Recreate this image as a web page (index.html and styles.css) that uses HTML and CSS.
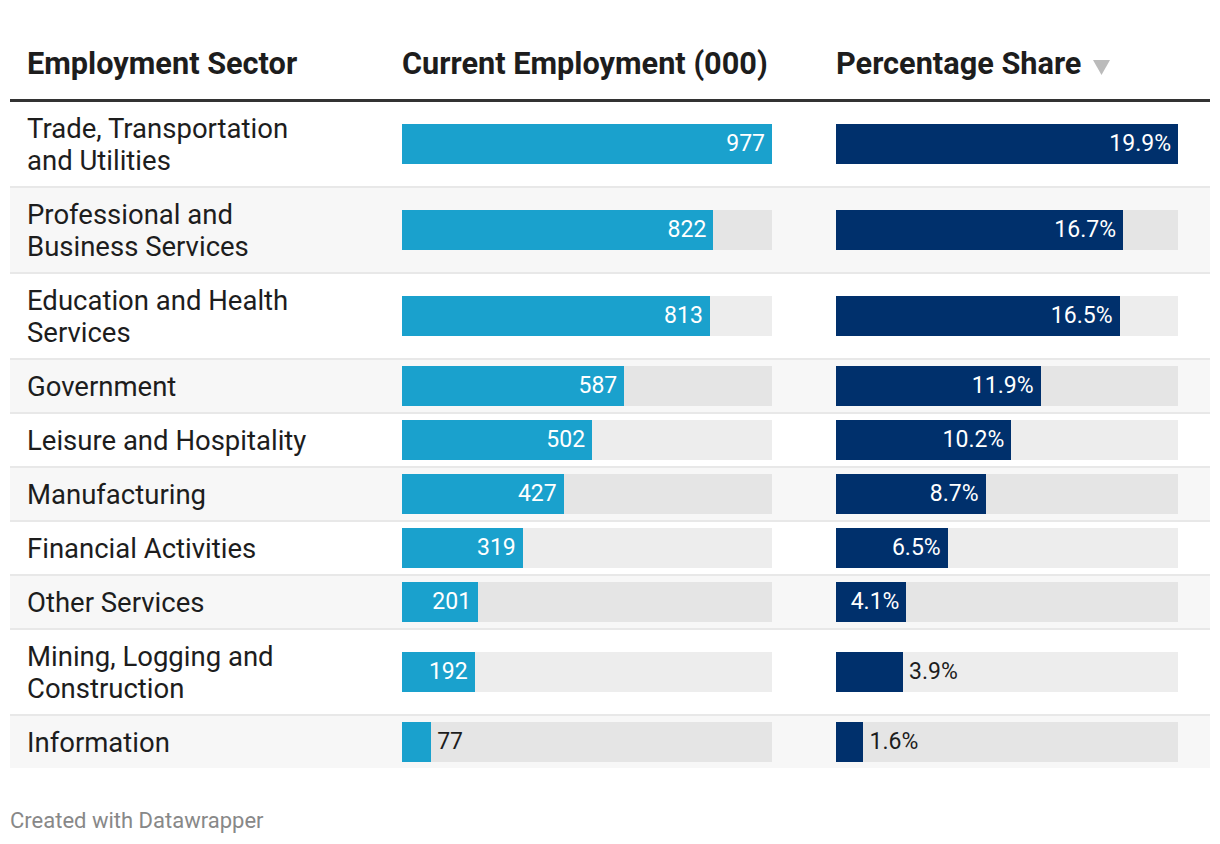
FILE: index.html
```html
<!DOCTYPE html>
<html lang="en">
<head>
<meta charset="utf-8">
<title>Employment by Sector</title>
<link rel="stylesheet" href="styles.css">
</head>
<body>
<div class="chart">
  <div class="table">
    <div class="row head">
      <div class="th">Employment Sector</div>
      <div class="th">Current Employment (000)</div>
      <div class="th">Percentage Share <svg class="sort" width="17" height="15" viewBox="0 0 17 15"><polygon points="0,0 17,0 8.5,15" fill="#bbbbbb"/></svg></div>
    </div>

    <div class="row">
      <div class="label">Trade, Transportation and Utilities</div>
      <div class="barcell"><div class="track"><div class="bar blue" style="width:100%"><span class="val in">977</span></div></div></div>
      <div class="barcell"><div class="track"><div class="bar navy" style="width:100%"><span class="val in">19.9%</span></div></div></div>
    </div>

    <div class="row">
      <div class="label">Professional and Business Services</div>
      <div class="barcell"><div class="track"><div class="bar blue" style="width:84.14%"><span class="val in">822</span></div></div></div>
      <div class="barcell"><div class="track"><div class="bar navy" style="width:83.92%"><span class="val in">16.7%</span></div></div></div>
    </div>

    <div class="row">
      <div class="label">Education and Health Services</div>
      <div class="barcell"><div class="track"><div class="bar blue" style="width:83.21%"><span class="val in">813</span></div></div></div>
      <div class="barcell"><div class="track"><div class="bar navy" style="width:82.91%"><span class="val in">16.5%</span></div></div></div>
    </div>

    <div class="row">
      <div class="label">Government</div>
      <div class="barcell"><div class="track"><div class="bar blue" style="width:60.08%"><span class="val in">587</span></div></div></div>
      <div class="barcell"><div class="track"><div class="bar navy" style="width:59.80%"><span class="val in">11.9%</span></div></div></div>
    </div>

    <div class="row">
      <div class="label">Leisure and Hospitality</div>
      <div class="barcell"><div class="track"><div class="bar blue" style="width:51.38%"><span class="val in">502</span></div></div></div>
      <div class="barcell"><div class="track"><div class="bar navy" style="width:51.26%"><span class="val in">10.2%</span></div></div></div>
    </div>

    <div class="row">
      <div class="label">Manufacturing</div>
      <div class="barcell"><div class="track"><div class="bar blue" style="width:43.71%"><span class="val in">427</span></div></div></div>
      <div class="barcell"><div class="track"><div class="bar navy" style="width:43.72%"><span class="val in">8.7%</span></div></div></div>
    </div>

    <div class="row">
      <div class="label">Financial Activities</div>
      <div class="barcell"><div class="track"><div class="bar blue" style="width:32.65%"><span class="val in">319</span></div></div></div>
      <div class="barcell"><div class="track"><div class="bar navy" style="width:32.66%"><span class="val in">6.5%</span></div></div></div>
    </div>

    <div class="row">
      <div class="label">Other Services</div>
      <div class="barcell"><div class="track"><div class="bar blue" style="width:20.57%"><span class="val in">201</span></div></div></div>
      <div class="barcell"><div class="track"><div class="bar navy" style="width:20.60%"><span class="val in">4.1%</span></div></div></div>
    </div>

    <div class="row">
      <div class="label">Mining, Logging and Construction</div>
      <div class="barcell"><div class="track"><div class="bar blue" style="width:19.65%"><span class="val in">192</span></div></div></div>
      <div class="barcell"><div class="track"><div class="bar navy" style="width:19.60%"></div><span class="val out">3.9%</span></div></div>
    </div>

    <div class="row">
      <div class="label">Information</div>
      <div class="barcell"><div class="track"><div class="bar blue" style="width:7.88%"></div><span class="val out">77</span></div></div>
      <div class="barcell"><div class="track"><div class="bar navy" style="width:8.04%"></div><span class="val out">1.6%</span></div></div>
    </div>
  </div>
  <div class="footer">Created with Datawrapper</div>
</div>
</body>
</html>
```

FILE: styles.css
```css
html, body {
  margin: 0;
  padding: 0;
  background: #ffffff;
}

body {
  font-family: Roboto, "Liberation Sans", Arial, sans-serif;
  color: #1d1d1d;
}

.chart {
  padding: 37px 10px 0 10px;
}

.row {
  display: grid;
  grid-template-columns: 311px 370px 342px;
  column-gap: 64px;
  padding: 0 32px 0 17px;
  border-bottom: 2px solid #e8e8e8;
}

.row:nth-child(odd) {
  background: #f7f7f7;
}

.row:last-child {
  border-bottom: none;
}

.row.head {
  background: #ffffff;
  border-bottom: 3px solid #333333;
}

.th {
  font-size: 30.7px;
  font-weight: 700;
  line-height: 32px;
  padding: 11px 0 19px 0;
  white-space: nowrap;
  color: #1d1d1d;
  display: flex;
  align-items: center;
}

.sort {
  margin-left: 12px;
  margin-top: 6px;
}

.label {
  font-size: 27.5px;
  line-height: 32px;
  padding: 11px 0 9px 0;
  max-width: 295px;
  color: #1d1d1d;
}

.barcell {
  align-self: center;
  padding: 6px 0;
}

.track {
  height: 40px;
  background: rgba(0, 0, 0, 0.07);
  display: flex;
  align-items: center;
}

.bar {
  height: 100%;
  display: flex;
  align-items: center;
  justify-content: flex-end;
  flex-shrink: 0;
}

.bar.blue {
  background: #1aa1cd;
}

.bar.navy {
  background: #00306c;
}

.val {
  font-size: 23px;
  line-height: 32px;
  white-space: nowrap;
}

.val.in {
  color: #ffffff;
  padding-right: 7px;
}

.val.out {
  color: #1d1d1d;
  padding-left: 6px;
}

.footer {
  margin-top: 41px;
  font-size: 22px;
  line-height: 24px;
  color: #888888;
}
```
